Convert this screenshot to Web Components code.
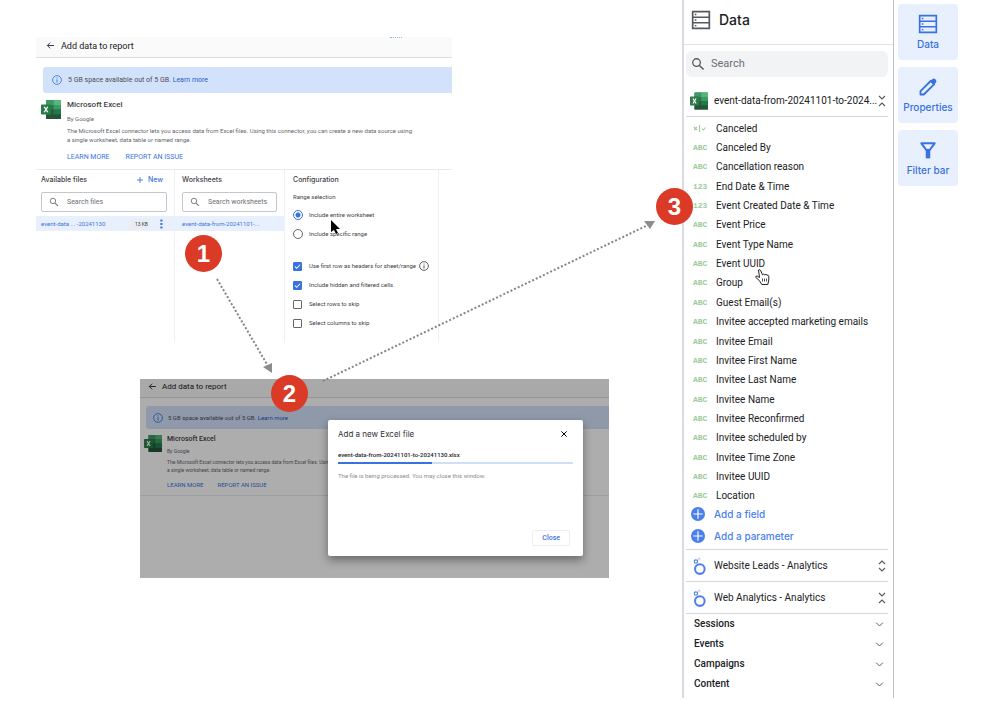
<!DOCTYPE html>
<html lang="en">
<head>
<meta charset="utf-8">
<meta name="viewport" content="width=device-width, initial-scale=1">
<title>Add data to report</title>
<style>
	html { background: #fff; }
	body {
		margin: 0;
		font-family: Roboto, 'Liberation Sans', sans-serif;
		color: #202124;
	}
</style>
</head>
<body>

<guide-board>
	<data-source-screen slot="screens"></data-source-screen>
	<upload-screen slot="screens"></upload-screen>
	<data-panel slot="panel"></data-panel>
	<side-rail slot="rail"></side-rail>

	<step-badge slot="notes" style="left: 185px; top: 235px">1</step-badge>
	<step-badge slot="notes" style="left: 271px; top: 375px">2</step-badge>
	<step-badge slot="notes" style="left: 656px; top: 188px">3</step-badge>
</guide-board>

<script>
const ICONS = {
	back: ['0 0 24 24', '<path d="M21 12H4M11 4.500L3.500 12l7.500 7.500" fill="none" stroke="currentColor" stroke-width="2.400"/>'],
	info: ['0 0 24 24', '<circle cx="12" cy="12" r="10.500" fill="none" stroke="currentColor" stroke-width="2"/><path d="M12 10.500V18M12 6v2.400" stroke="currentColor" stroke-width="2.200"/>'],
	search: ['0 0 24 24', '<circle cx="9.500" cy="9.500" r="6.500" fill="none" stroke="currentColor" stroke-width="2.200"/><path d="M14.500 14.500l7 7" stroke="currentColor" stroke-width="2.600"/>'],
	plus: ['0 0 24 24', '<path d="M12 3v18M3 12h18" stroke="currentColor" stroke-width="2.600"/>'],
	close: ['0 0 24 24', '<path d="M4 4l16 16M20 4L4 20" stroke="currentColor" stroke-width="3"/>'],
	more: ['0 0 24 24', '<path d="M8 1h5v5H8zM8 9.500h5v5H8zM8 18h5v5H8z" fill="currentColor"/>'],
	rows: ['0 0 24 24', '<path d="M2 2h20v20H2zM2 8.700h20M2 15.300h20" fill="none" stroke="currentColor" stroke-width="2"/><path d="M4.500 4.600h2v1.600h-2zM4.500 11.200h2v1.600h-2zM4.500 17.900h2v1.600h-2z" fill="currentColor"/>'],
	pencil: ['0 0 24 24', '<path d="M3 21v-4L15.500 4.500l4 4L7 21z" fill="none" stroke="currentColor" stroke-width="2.200" stroke-linejoin="round"/><path d="M14.500 5.500l3-3q1.500-1.300 3 0l1 1q1.300 1.500 0 3l-3 3z" fill="currentColor"/>'],
	filter: ['0 0 24 24', '<path d="M4 4h16l-6 8h-4z" fill="none" stroke="currentColor" stroke-width="2.400" stroke-linejoin="round"/><path d="M9.300 11.500h5.400V22H9.300z" fill="currentColor"/>'],
	addCircle: ['0 0 24 24', '<circle cx="12" cy="12" r="12" fill="#4b80ec"/><path d="M12 4v16M4 12h16" stroke="#fff" stroke-width="2"/>'],
	chevron: ['0 0 24 24', '<path d="M3 7l9 9 9-9" fill="none" stroke="currentColor" stroke-width="2.600"/>'],
	expand: ['0 0 16 24', '<path d="M2 8l6-6 6 6M2 16l6 6 6-6" fill="none" stroke="currentColor" stroke-width="2.200"/>'],
	collapse: ['0 0 16 24', '<path d="M2 2l6 6 6-6M2 22l6-6 6 6" fill="none" stroke="currentColor" stroke-width="2.200"/>'],
	bool: ['0 0 26 14', '<path d="M2 4l6 6M8 4l-6 6M13 0v14M18 7l2.500 3L25 5" fill="none" stroke="currentColor" stroke-width="2.200"/>'],
	looker: ['0 0 24 32', '<circle cx="13.500" cy="21.500" r="8.500" fill="none" stroke="#4b80ec" stroke-width="3.600"/><circle cx="6.500" cy="8" r="3" fill="none" stroke="#4b80ec" stroke-width="2"/><circle cx="12" cy="3.500" r="2" fill="none" stroke="#9fbcf6" stroke-width="1.200"/>'],
	excel: ['0 0 40 38', '<rect x="10" y="0" width="30" height="38" rx="1.500" fill="#256b45"/><path d="M10 1.500Q10 0 11.500 0H25v10H10z" fill="#3c9b62"/><path d="M25 0h13.500Q40 0 40 1.500V10H25z" fill="#58b67a"/><path d="M10 10h15v9H10z" fill="#23794a"/><path d="M25 10h15v9H25z" fill="#3c9b62"/><path d="M10 19h15v10H10z" fill="#245c3c"/><path d="M25 19h15v10H25z" fill="#23794a"/><path d="M10 29h30v7.500Q40 38 38.500 38h-27Q10 38 10 36.500z" fill="#245539"/><rect y="9" width="20" height="20" rx="1.500" fill="#2b7a48"/><path d="M6.500 13.500l7 11M13.500 13.500l-7 11" stroke="#fff" stroke-width="2.600"/>']
};

class AppIcon extends HTMLElement {

	constructor() {

		super();

		const [box, shape] = ICONS[this.getAttribute('name')];

		this.attachShadow({ mode: 'open' });
		this.shadowRoot.innerHTML = `
			<style>
				:host {
					display: block;
					flex: none;
					width: 10px;
					height: 10px;
				}

				svg {
					display: block;
					width: 100%;
					height: 100%;
				}
			</style>
			<svg viewBox="${box}" aria-hidden="true">${shape}</svg>
		`;

	}

}

customElements.define('app-icon', AppIcon);


class GuideBoard extends HTMLElement {

	constructor() {

		super();

		this.attachShadow({ mode: 'open' });
		this.shadowRoot.innerHTML = `
			<style>
				:host {
					position: relative;
					display: grid;
					grid-template-columns: minmax(0, 1fr) 212px 64px;
					min-height: 100vh;
					padding-right: 42px;
					box-sizing: border-box;
				}

				.screens {
					display: flex;
					flex-direction: column;
					gap: 36px;
					padding-top: 37px;
				}

				.rail {
					padding-left: 4px;
				}

				.overlay {
					position: absolute;
					left: 0;
					top: 0;
					pointer-events: none;
				}
			</style>
			<main class="screens"><slot name="screens"></slot></main>
			<slot name="panel"></slot>
			<div class="rail"><slot name="rail"></slot></div>
			<svg class="overlay" width="800" height="400" aria-hidden="true">
				<g stroke="#858585" stroke-width="2" stroke-dasharray="2 2" fill="none">
					<path d="M217 279L268 366"/>
					<path d="M323 381L648 225"/>
				</g>
				<path d="M263 367l9-4v10zM644 221h11l-5 8z" fill="#8c8c8c"/>
				<path d="M331 220v12l3-2 2 4 2-1-2-4h4z" fill="#000" stroke="#fff" stroke-width="1" paint-order="stroke"/>
				<path d="M758.500 270q1.500-1 2.300.8l1.700 4q1-1.200 2.300 0 1.200-.9 2.200.3 1.500-.4 1.800 1.400v3.500l-1 4.500h-6l-2.500-4-3.500-3q-.5-1.800 1.500-1.300l2.200 1.300z" fill="#fff" stroke="#222" stroke-width="1"/>
				<path d="M762.500 278.500v3M764.500 278.500v3M766.500 278.500v3" stroke="#555" stroke-width="1"/>
			</svg>
			<slot name="notes"></slot>
		`;

	}

}

customElements.define('guide-board', GuideBoard);


class StepBadge extends HTMLElement {

	constructor() {

		super();

		this.attachShadow({ mode: 'open' });
		this.shadowRoot.innerHTML = `
			<style>
				:host {
					position: absolute;
					display: grid;
					place-items: center;
					width: 37px;
					height: 37px;
					border-radius: 50%;
					background: #db3a26;
					color: #fff;
					font: bold 24px/37px 'Liberation Sans', Arial, sans-serif;
				}
			</style>
			<slot></slot>
		`;

	}

}

customElements.define('step-badge', StepBadge);


// Title bar, storage banner and connector summary. Add "small" for the reduced size.
class ConnectorHeader extends HTMLElement {

	constructor() {

		super();

		this.attachShadow({ mode: 'open' });
		this.shadowRoot.innerHTML = `
			<style>
				:host {
					--title: 9px;
					--name: 8px;
					--text: 7px;
					--note: 6px;
					--bar: 21px;
					--banner: 26px;
					display: block;
					border-bottom: 1px solid #e8eaed;
				}

				:host([small]) {
					--title: 8px;
					--name: 7px;
					--text: 6px;
					--note: 5px;
					--bar: 19px;
					--banner: 23px;
				}

				header {
					display: flex;
					align-items: center;
					gap: 6px;
					height: var(--bar);
					padding: 0 0 3px 10px;
					box-sizing: border-box;
					background: #fafafa;
					border-bottom: 1px solid #dadce0;
				}

				:host([small]) header {
					padding-left: 8px;
					gap: 5px;
				}

				h1, h2, p {
					margin: 0;
				}

				h1 {
					font: 400 var(--title)/12px Roboto, sans-serif;
					color: #202124;
				}

				header app-icon {
					width: 9px;
					height: 9px;
				}

				a {
					color: #3b74e0;
					text-decoration: none;
				}

				.banner {
					display: flex;
					align-items: center;
					gap: 6px;
					height: var(--banner);
					margin: 9px 0 7px 7px;
					padding-left: 9px;
					border-radius: 3px 0 0 3px;
					background: #d3e2fb;
					color: #4b4f55;
					font-size: var(--text);
				}

				:host([small]) .banner {
					margin: 8px 0 6px 6px;
					padding-left: 7px;
					gap: 5px;
				}

				.banner a {
					color: #2a5bc0;
				}

				.banner app-icon {
					color: #3b74e0;
				}

				.connector {
					display: flex;
					gap: 6px;
					padding: 0 20px 7px 5px;
				}

				:host([small]) .connector {
					gap: 5px;
					padding: 0 12px 5px 4px;
				}

				.connector app-icon {
					width: 20px;
					height: 19px;
				}

				:host([small]) .connector app-icon {
					width: 18px;
					height: 17px;
				}

				h2 {
					font: 500 var(--name)/10px Roboto, sans-serif;
					color: #3f4145;
				}

				.by, .about {
					font-size: var(--note);
					line-height: 9px;
					color: #64676c;
				}

				.by {
					margin: 4px 0 3px;
				}

				:host([small]) h2 {
					line-height: 9px;
				}

				:host([small]) .by {
					margin: 3px 0 2px;
				}

				:host([small]) .about {
					line-height: 8px;
				}

				nav {
					display: flex;
					gap: 16px;
					margin-top: 8px;
					font-size: var(--text);
					line-height: 10px;
				}

				:host([small]) nav {
					gap: 14px;
					margin-top: 6px;
				}
			</style>
			<header><app-icon name="back"></app-icon><h1>Add data to report</h1></header>
			<div class="banner">
				<app-icon name="info"></app-icon>
				<span>5 GB space available out of 5 GB. <a href="#">Learn more</a></span>
			</div>
			<div class="connector">
				<app-icon name="excel"></app-icon>
				<div>
					<h2>Microsoft Excel</h2>
					<p class="by">By Google</p>
					<p class="about">The Microsoft Excel connector lets you access data from Excel files. Using this connector, you can create a new data source using<br>a single worksheet, data table or named range.</p>
					<nav><a href="#">LEARN MORE</a><a href="#">REPORT AN ISSUE</a></nav>
				</div>
			</div>
		`;

	}

}

customElements.define('connector-header', ConnectorHeader);


class SearchBox extends HTMLElement {

	constructor() {

		super();

		const label = this.getAttribute('label');

		this.attachShadow({ mode: 'open' });
		this.shadowRoot.innerHTML = `
			<style>
				:host {
					display: block;
				}

				label {
					display: flex;
					align-items: center;
					gap: 8px;
					height: 20px;
					padding-left: 7px;
					box-sizing: border-box;
					border: 1px solid #c4c7cc;
					border-radius: 2px;
					color: #75787d;
				}

				input {
					flex: 1;
					min-width: 0;
					padding: 0;
					border: 0;
					outline: 0;
					background: none;
					font: 7px/10px Roboto, sans-serif;
				}

				input::placeholder {
					color: #6c6f74;
					opacity: 1;
				}

				:host([filled]) label {
					height: 26px;
					gap: 6px;
					padding-left: 5px;
					border: 0;
					border-radius: 6px;
					background: #f1f3f4;
				}

				:host([filled]) input {
					font-size: 11px;
					line-height: 14px;
				}

				:host([filled]) app-icon {
					width: 14px;
					height: 14px;
					color: #55585c;
				}
			</style>
			<label>
				<app-icon name="search"></app-icon>
				<input type="text" placeholder="${label}" aria-label="${label}">
			</label>
		`;

	}

}

customElements.define('search-box', SearchBox);


class ChoiceItem extends HTMLElement {

	constructor() {

		super();

		const type = this.getAttribute('type');
		const checked = this.hasAttribute('checked') ? 'checked' : '';

		this.attachShadow({ mode: 'open' });
		this.shadowRoot.innerHTML = `
			<style>
				:host {
					display: flex;
					align-items: center;
					gap: 3px;
					height: 10px;
					font-size: 6px;
					line-height: 10px;
					color: #3f4145;
				}

				label {
					display: flex;
					align-items: center;
					gap: 7px;
				}

				input {
					appearance: none;
					flex: none;
					width: 9px;
					height: 9px;
					margin: 0;
					border: 1px solid #63666b;
					border-radius: 1px;
					background: center / 100% 100% no-repeat;
				}

				input[type=radio] {
					width: 10px;
					height: 10px;
					margin-right: -1px;
					border-radius: 50%;
				}

				input[type=radio]:checked {
					border-color: #3871e0;
					background: radial-gradient(circle, #3871e0 2px, transparent 3px);
				}

				input[type=checkbox]:checked {
					border-color: #3871e0;
					background-color: #3871e0;
					background-image: url("data:image/svg+xml,%3Csvg xmlns='http://www.w3.org/2000/svg' viewBox='0 0 8 8'%3E%3Cpath d='M1 4l2 2 4-4' fill='none' stroke='white' stroke-width='1.200'/%3E%3C/svg%3E");
				}
			</style>
			<label><input type="${type}" name="choice" ${checked}><slot></slot></label>
			<slot name="after"></slot>
		`;

	}

}

customElements.define('choice-item', ChoiceItem);


class DataSourceScreen extends HTMLElement {

	constructor() {

		super();

		this.attachShadow({ mode: 'open' });
		this.shadowRoot.innerHTML = `
			<style>
				:host {
					display: block;
					position: relative;
					margin: 0 230px 0 36px;
				}

				.grip {
					position: absolute;
					top: 0;
					right: 50px;
					width: 12px;
					border-top: 1px dotted #8cb4e8;
				}

				.columns {
					display: grid;
					grid-template-columns: minmax(0, 139fr) minmax(0, 110fr) minmax(0, 154fr) minmax(0, 13fr);
					min-height: 173px;
				}

				section {
					padding-top: 5px;
					border-right: 1px solid #eef0f2;
				}

				section:last-child {
					border: 0;
				}

				.head {
					display: flex;
					justify-content: space-between;
					align-items: center;
					height: 10px;
					margin: 0 11px 7px 5px;
				}

				.sheets .head, .sheets search-box {
					margin-left: 7px;
				}

				h3 {
					margin: 0;
					font: 500 7px/10px Inter, Roboto, sans-serif;
					color: #3f4145;
				}

				button {
					display: flex;
					align-items: center;
					padding: 0;
					border: 0;
					background: none;
					color: #3b74e0;
					font: 500 7px/10px Inter, Roboto, sans-serif;
				}

				.head button {
					gap: 4px;
				}

				.head app-icon {
					width: 8px;
					height: 8px;
				}

				search-box {
					margin: 0 7px 4px 5px;
				}

				.item {
					display: flex;
					align-items: center;
					height: 15px;
					padding: 0 8px 0 5px;
					margin-right: -1px;
					background: #e8effd;
					white-space: nowrap;
				}

				.sheets .item {
					padding-left: 7px;
				}

				.item button {
					font: 6px/10px Roboto, sans-serif;
				}

				.size {
					margin: 0 7px 0 auto;
					padding: 0 2px 0 6px;
					border-radius: 4px;
					background: #e9edf2;
					color: #3f4145;
					font-size: 5px;
					line-height: 10px;
				}

				.config {
					padding-left: 8px;
				}

				.config .head {
					margin-left: 0;
				}

				fieldset {
					display: grid;
					gap: 9px;
					min-width: 0;
					margin: 0;
					padding: 0;
					border: 0;
				}

				legend {
					padding: 0;
					margin-bottom: 8px;
					font-size: 6px;
					line-height: 10px;
					color: #3f4145;
				}

				.options {
					display: grid;
					gap: 9px;
					margin-top: 22px;
					white-space: nowrap;
				}
			</style>
			<div class="grip"></div>
			<connector-header></connector-header>
			<div class="columns">
				<section class="files">
					<div class="head"><h3>Available files</h3><button><app-icon name="plus"></app-icon>New</button></div>
					<search-box label="Search files"></search-box>
					<div class="item">
						<button>event-data ... -20241130</button>
						<span class="size">13 KB</span>
						<button aria-label="More"><app-icon name="more"></app-icon></button>
					</div>
				</section>
				<section class="sheets">
					<div class="head"><h3>Worksheets</h3></div>
					<search-box label="Search worksheets"></search-box>
					<div class="item"><button>event-data-from-20241101-...</button></div>
				</section>
				<section class="config">
					<div class="head"><h3>Configuration</h3></div>
					<fieldset>
						<legend>Range selection</legend>
						<choice-item type="radio" checked>Include entire worksheet</choice-item>
						<choice-item type="radio">Include specific range</choice-item>
					</fieldset>
					<div class="options">
						<choice-item type="checkbox" checked>Use first row as headers for sheet/range<app-icon slot="after" name="info"></app-icon></choice-item>
						<choice-item type="checkbox" checked>Include hidden and filtered cells</choice-item>
						<choice-item type="checkbox">Select rows to skip</choice-item>
						<choice-item type="checkbox">Select columns to skip</choice-item>
					</div>
				</section>
				<section></section>
			</div>
		`;

	}

}

customElements.define('data-source-screen', DataSourceScreen);


class UploadScreen extends HTMLElement {

	constructor() {

		super();

		this.attachShadow({ mode: 'open' });
		this.shadowRoot.innerHTML = `
			<style>
				:host {
					display: block;
					position: relative;
					min-height: 199px;
					margin: 0 73px 0 140px;
					overflow: hidden;
				}

				.shade {
					position: absolute;
					inset: 0;
					background: rgba(0, 0, 0, 0.32);
				}

				.dialog {
					position: absolute;
					top: 41px;
					right: 26px;
					display: flex;
					flex-direction: column;
					width: 255px;
					height: 136px;
					padding: 8px 10px 10px;
					box-sizing: border-box;
					border-radius: 2px;
					background: #fff;
					box-shadow: 0 4px 10px rgba(0, 0, 0, 0.4);
				}

				.title {
					display: flex;
					justify-content: space-between;
					align-items: center;
					margin-bottom: 10px;
				}

				h2 {
					margin: 0;
					font: 400 8px/12px Inter, Roboto, sans-serif;
					color: #303134;
				}

				button {
					padding: 0;
					border: 0;
					background: none;
				}

				.title button {
					margin-right: 5px;
				}

				.title app-icon {
					width: 8px;
					height: 8px;
				}

				label {
					font-size: 6px;
					line-height: 10px;
					font-weight: 500;
				}

				progress {
					appearance: none;
					display: block;
					width: 100%;
					height: 2px;
					margin: 2px 0 7px;
					border: 0;
				}

				progress::-webkit-progress-bar {
					background: #d0def8;
				}

				progress::-webkit-progress-value {
					background: #3871e0;
				}

				p {
					margin: 0;
					font-size: 6px;
					line-height: 10px;
					color: #8b8e93;
				}

				.close {
					align-self: flex-end;
					margin: auto 3px 0 0;
					padding: 0 9px;
					border: 1px solid #eceef1;
					border-radius: 2px;
					color: #3b74e0;
					font: 500 7px/14px Roboto, sans-serif;
				}
			</style>
			<connector-header small></connector-header>
			<div class="shade"></div>
			<div class="dialog" role="dialog" aria-labelledby="title">
				<div class="title"><h2 id="title">Add a new Excel file</h2><button aria-label="Dismiss"><app-icon name="close"></app-icon></button></div>
				<label for="upload">event-data-from-20241101-to-20241130.xlsx</label>
				<progress id="upload" value="40" max="100"></progress>
				<p>The file is being processed. You may close this window.</p>
				<button class="close">Close</button>
			</div>
		`;

	}

}

customElements.define('upload-screen', UploadScreen);


class FieldRow extends HTMLElement {

	constructor() {

		super();

		const type = this.getAttribute('type');
		const mark = type === 'bool' ? '<app-icon name="bool"></app-icon>' : type;

		this.attachShadow({ mode: 'open' });
		this.shadowRoot.innerHTML = `
			<style>
				:host {
					display: flex;
					align-items: center;
					gap: 9px;
					padding-left: 7px;
					font-size: 10px;
					line-height: 14px;
				}

				.type {
					width: 14px;
					font: bold 8px/10px 'Liberation Mono', monospace;
					color: #9ccb9b;
				}

				app-icon {
					width: 13px;
					height: 7px;
				}
			</style>
			<span class="type">${mark}</span>
			<slot></slot>
		`;

	}

}

customElements.define('field-row', FieldRow);


class DataPanel extends HTMLElement {

	constructor() {

		super();

		this._fields = [
			['bool', 'Canceled'],
			['ABC', 'Canceled By'],
			['ABC', 'Cancellation reason'],
			['123', 'End Date &amp; Time'],
			['123', 'Event Created Date &amp; Time'],
			['ABC', 'Event Price'],
			['ABC', 'Event Type Name'],
			['ABC', 'Event UUID'],
			['ABC', 'Group'],
			['ABC', 'Guest Email(s)'],
			['ABC', 'Invitee accepted marketing emails'],
			['ABC', 'Invitee Email'],
			['ABC', 'Invitee First Name'],
			['ABC', 'Invitee Last Name'],
			['ABC', 'Invitee Name'],
			['ABC', 'Invitee Reconfirmed'],
			['ABC', 'Invitee scheduled by'],
			['ABC', 'Invitee Time Zone'],
			['ABC', 'Invitee UUID'],
			['ABC', 'Location']
		];

		this.attachShadow({ mode: 'open' });
		this.shadowRoot.innerHTML = `
			<style>
				:host {
					display: flex;
					flex-direction: column;
					margin-bottom: 3px;
					padding-bottom: 4px;
					box-sizing: border-box;
					border-left: 2px solid #d9dae2;
					border-right: 1px solid #bfc1c5;
				}

				header {
					display: flex;
					align-items: center;
					gap: 8px;
					height: 45px;
					padding: 0 7px 4px;
					box-sizing: border-box;
					border-bottom: 1px solid #dfe1e4;
				}

				header app-icon {
					width: 20px;
					height: 20px;
					color: #55585c;
				}

				h2 {
					margin: 0;
					font: 500 14px/18px Inter, Roboto, sans-serif;
				}

				search-box {
					margin: 6px 5px 8px 2px;
				}

				button {
					display: flex;
					align-items: center;
					padding: 0;
					border: 0;
					background: none;
					color: inherit;
					font: 10px/14px Roboto, sans-serif;
					text-align: left;
				}

				.source {
					height: 32px;
					margin: 0 5px 0 2px;
					padding: 0 2px 0 4px;
					box-sizing: border-box;
					border-bottom: 1px solid #d5d7da;
				}

				.source span {
					flex: 1;
					min-width: 0;
					white-space: nowrap;
				}

				.source app-icon:first-child {
					width: 18px;
					height: 18px;
					margin-right: 6px;
				}

				.source app-icon:last-child {
					width: 8px;
					height: 12px;
					color: #55585c;
				}

				.list {
					flex: 1;
					display: grid;
					grid-auto-rows: 1fr;
					margin: 2px 0 0 2px;
				}

				.add {
					display: grid;
					gap: 6px;
					margin: 0 5px 0 2px;
					padding: 0 5px 5px;
					border-bottom: 1px solid #d5d7da;
				}

				.add button {
					gap: 9px;
					height: 16px;
					color: #4b80ec;
					font: 500 10px/14px Inter, Roboto, sans-serif;
				}

				.add app-icon {
					width: 14px;
					height: 14px;
				}

				.group {
					justify-content: space-between;
					height: 20px;
					padding: 0 9px 0 10px;
					font-weight: 500;
				}

				.group app-icon {
					width: 9px;
					height: 9px;
					color: #55585c;
				}
			</style>
			<header><app-icon name="rows"></app-icon><h2>Data</h2></header>
			<search-box filled label="Search"></search-box>
			<button class="source"><app-icon name="excel"></app-icon><span>event-data-from-20241101-to-2024...</span><app-icon name="collapse"></app-icon></button>
			<div class="list">${this._fields.map(([type, name]) => `<field-row type="${type}">${name}</field-row>`).join('')}</div>
			<div class="add">
				<button><app-icon name="addCircle"></app-icon>Add a field</button>
				<button><app-icon name="addCircle"></app-icon>Add a parameter</button>
			</div>
			<button class="source"><app-icon name="looker"></app-icon><span>Website Leads - Analytics</span><app-icon name="expand"></app-icon></button>
			<button class="source"><app-icon name="looker"></app-icon><span>Web Analytics - Analytics</span><app-icon name="collapse"></app-icon></button>
			${['Sessions', 'Events', 'Campaigns', 'Content'].map(name => `<button class="group">${name}<app-icon name="chevron"></app-icon></button>`).join('')}
		`;

	}

}

customElements.define('data-panel', DataPanel);


class SideRail extends HTMLElement {

	constructor() {

		super();

		this.attachShadow({ mode: 'open' });
		this.shadowRoot.innerHTML = `
			<style>
				:host {
					display: grid;
					gap: 7px;
					padding-top: 4px;
				}

				button {
					display: flex;
					flex-direction: column;
					align-items: center;
					gap: 3px;
					height: 56px;
					padding: 10px 0 0;
					border: 0;
					border-radius: 4px;
					background: #e8effd;
					color: #3871e0;
					font: 500 10px/14px Inter, Roboto, sans-serif;
				}

				app-icon {
					width: 20px;
					height: 20px;
				}
			</style>
			<button><app-icon name="rows"></app-icon>Data</button>
			<button><app-icon name="pencil"></app-icon>Properties</button>
			<button><app-icon name="filter"></app-icon>Filter bar</button>
		`;

	}

}

customElements.define('side-rail', SideRail);
</script>
</body>
</html>
